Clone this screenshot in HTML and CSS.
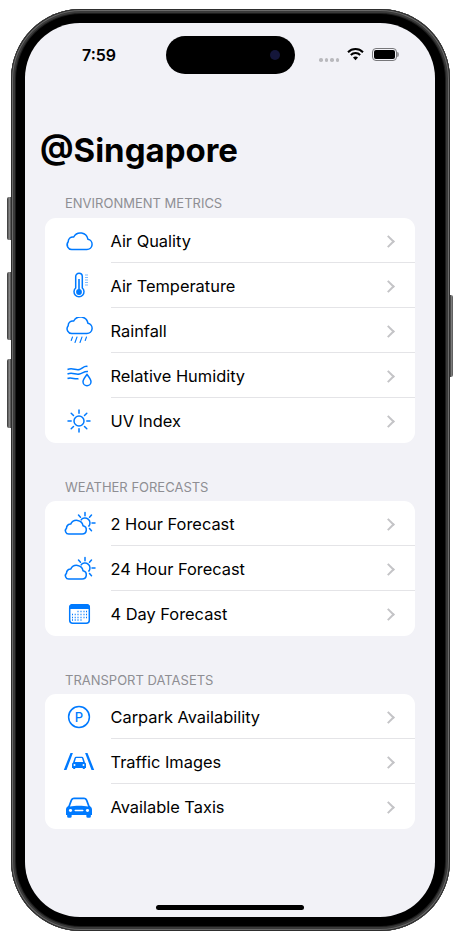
FILE: index.html
```html
<!DOCTYPE html>
<html lang="en">
<head>
	<meta charset="UTF-8">
	<title>@Singapore</title>
	<link rel="stylesheet" href="styles.css">
</head>
<body>
	<div class="phone">
		<div class="side-btn btn-action"></div>
		<div class="side-btn btn-up"></div>
		<div class="side-btn btn-down"></div>
		<div class="side-btn btn-power"></div>
		<div class="screen">
			<div class="status">
				<div class="time">7:59</div>
				<div class="island"><div class="lens"></div></div>
				<div class="status-right">
					<div class="dots"><i></i><i></i><i></i><i></i></div>
					<svg class="wifi" width="17" height="14" viewBox="0 0 17 14">
						<path d="M1 5.200a10.600 10.600 0 0 1 15 0" fill="none" stroke="#000" stroke-width="2"/>
						<path d="M3.800 8a6.700 6.700 0 0 1 9.400 0" fill="none" stroke="#000" stroke-width="2"/>
						<path d="M6 10.600a3.400 3.400 0 0 1 5 0L8.500 13.200z" fill="#000"/>
					</svg>
					<div class="battery"><div class="battery-fill"></div></div>
				</div>
			</div>

			<h1 class="title">@Singapore</h1>

			<div class="section-label first">ENVIRONMENT METRICS</div>
			<div class="card">
				<div class="row">
					<svg class="icon" width="34" height="28" viewBox="0 0 34 28"><path class="line" d="M10.500 22.500h14.300a5.200 5.200 0 0 0 1.100-10.300 7.600 7.600 0 0 0-14.200-2.200 4.600 4.600 0 0 0-5.500 4.700 4.800 4.800 0 0 0 4.300 7.800z"/></svg>
					<div class="row-body"><span>Air Quality</span><span class="chev"></span></div>
				</div>
				<div class="row">
					<svg class="icon" width="34" height="28" viewBox="0 0 34 28">
						<path class="line" d="M13.700 16V4.500a3.300 3.300 0 0 1 6.600 0V16a5 5 0 1 1-6.600 0z"/>
						<circle class="fill" cx="17" cy="20" r="2.900"/>
						<rect class="fill" x="16.200" y="7" width="1.600" height="12"/>
						<path class="tick" d="M23 3h3M23 5.500h3M23 8h3M23 10.500h3M23 13h3"/>
					</svg>
					<div class="row-body"><span>Air Temperature</span><span class="chev"></span></div>
				</div>
				<div class="row">
					<svg class="icon" width="34" height="28" viewBox="0 0 34 28">
						<path class="line" d="M10.500 16.500h14.300a5.200 5.200 0 0 0 1.100-10.300 7.600 7.600 0 0 0-14.200-2.200 4.600 4.600 0 0 0-5.500 4.700 4.800 4.800 0 0 0 4.300 7.800z"/>
						<path class="thin" d="M10.500 20l-1.300 3.500M15 20l-2 5.500M20 20l-2 5.500M24.500 20l-1.300 3.500"/>
					</svg>
					<div class="row-body"><span>Rainfall</span><span class="chev"></span></div>
				</div>
				<div class="row">
					<svg class="icon" width="34" height="28" viewBox="0 0 34 28">
						<path class="line" d="M5.500 7.500c5-2 8 1 12 0 3-.8 4.500-4 8-3M5.500 12c5-2 8 1 12 0 3-.8 5-3 8.500-2.500M5.500 16.500c4-1.800 7 1.200 11 .2"/>
						<path class="line" d="M25 12.500c-2.200 3-4 5-4 7.200a4 4 0 0 0 8 0c0-2.200-1.800-4.200-4-7.200z"/>
					</svg>
					<div class="row-body"><span>Relative Humidity</span><span class="chev"></span></div>
				</div>
				<div class="row">
					<svg class="icon" width="34" height="28" viewBox="0 0 34 28">
						<circle class="line" cx="17" cy="14" r="5"/>
						<path class="ray" d="M17 3v3.200M17 21.800V25M6 14h3.200M24.800 14H28M9.200 6.200l2.300 2.300M22.500 19.500l2.300 2.300M9.200 21.800l2.300-2.300M22.500 8.500l2.300-2.300"/>
					</svg>
					<div class="row-body"><span>UV Index</span><span class="chev"></span></div>
				</div>
			</div>

			<div class="section-label">WEATHER FORECASTS</div>
			<div class="card">
				<div class="row">
					<svg class="icon" width="34" height="28" viewBox="0 0 34 28">
						<use href="#cloud-sun"/>
					</svg>
					<div class="row-body"><span>2 Hour Forecast</span><span class="chev"></span></div>
				</div>
				<div class="row">
					<svg class="icon" width="34" height="28" viewBox="0 0 34 28">
						<use href="#cloud-sun"/>
					</svg>
					<div class="row-body"><span>24 Hour Forecast</span><span class="chev"></span></div>
				</div>
				<div class="row">
					<svg class="icon" width="34" height="28" viewBox="0 0 34 28">
						<rect class="line" x="7.700" y="4.700" width="19.600" height="18.600" rx="3"/>
						<path class="fill" d="M7 9V7.500A3.500 3.500 0 0 1 10.500 4h14A3.500 3.500 0 0 1 28 7.500V9z"/>
						<path class="dot-grid" d="M15.500 11.500h1M18.500 11.500h1M21.500 11.500h1M24 11.500h1M10 14.500h1M12.700 14.500h1M15.500 14.500h1M18.500 14.500h1M21.500 14.500h1M24 14.500h1M10 17.500h1M12.700 17.500h1M15.500 17.500h1M18.500 17.500h1M21.500 17.500h1M24 17.500h1M10 20h1M12.700 20h1M15.500 20h1M18.500 20h1"/>
					</svg>
					<div class="row-body"><span>4 Day Forecast</span><span class="chev"></span></div>
				</div>
			</div>

			<div class="section-label">TRANSPORT DATASETS</div>
			<div class="card">
				<div class="row">
					<svg class="icon" width="34" height="28" viewBox="0 0 34 28">
						<circle class="line" cx="17" cy="14" r="10.400"/>
						<text class="icon-letter" x="17" y="18.800" text-anchor="middle">P</text>
					</svg>
					<div class="row-body"><span>Carpark Availability</span><span class="chev"></span></div>
				</div>
				<div class="row">
					<svg class="icon" width="34" height="28" viewBox="0 0 34 28">
						<path class="fill" d="M8.500 5h2.400L4.500 22H1.800zM25.500 5h-2.400L29.500 22h2.700z"/>
						<path class="fill" d="M11 14.500l1.500-4.500c.3-.8.8-1.200 1.600-1.200h5.800c.8 0 1.300 .4 1.600 1.200L23 14.500c.8 .5 1 1 1 1.700V20h-1.200v1h-2v-1H13.200v1h-2v-1H10v-3.800c0-.7 .3-1.200 1-1.700z"/>
						<path class="cut-fill" d="M12.800 14l1.100-3.600c.1-.3 .3-.4 .6-.4h5c.3 0 .5 .1 .6 .4L21.200 14z"/>
						<circle class="cut-fill" cx="12.500" cy="17" r="1"/>
						<circle class="cut-fill" cx="21.500" cy="17" r="1"/>
					</svg>
					<div class="row-body"><span>Traffic Images</span><span class="chev"></span></div>
				</div>
				<div class="row">
					<svg class="icon" width="34" height="28" viewBox="0 0 34 28">
						<g transform="translate(17 14) scale(1.130 1) translate(-17 -14)">
							<path class="fill" d="M7.500 13l2-6c.5-1.600 1.500-2.500 3.200-2.500h8.600c1.700 0 2.700 .9 3.200 2.500l2 6c1.300 .8 2 2 2 3.500v5.500h-1v1.500a1.300 1.300 0 0 1-1.300 1.300h-1.400a1.300 1.300 0 0 1-1.300-1.300V22H10.500v1.500a1.300 1.300 0 0 1-1.300 1.300H7.800a1.300 1.300 0 0 1-1.300-1.300V22h-1v-5.500c0-1.500 .7-2.700 2-3.500z"/>
							<path class="cut-fill" d="M9 13.500l1.800-5.600c.3-1 1-1.600 2-1.600h8.400c1 0 1.700 .6 2 1.600L25 13.500c-2-.5-5-.7-8-.7s-6 .2-8 .7z"/>
							<circle class="cut-fill" cx="9.500" cy="17.500" r="1.400"/>
							<circle class="cut-fill" cx="24.500" cy="17.500" r="1.400"/>
							<rect class="cut-fill" x="13" y="16.800" width="8" height="1.500" rx=".7"/>
						</g>
					</svg>
					<div class="row-body"><span>Available Taxis</span><span class="chev"></span></div>
				</div>
			</div>

			<div class="home-bar"></div>
		</div>
	</div>

	<svg class="defs" width="0" height="0">
		<defs>
			<g id="cloud-sun">
				<path class="ray" d="M23 2.500v3.200M33 13h-3M16.500 5l2 2.300M29.500 5l-2 2.300M27.500 18.500l2 2.300"/>
				<path class="line" d="M18.800 10.300a5 5 0 1 1 7.700 6.300"/>
				<path class="line" d="M7 24h13a4.200 4.200 0 0 0 1-8.300 6.500 6.500 0 0 0-12.200-1.800 4.200 4.200 0 0 0-4.300 4.200A3.400 3.400 0 0 0 7 24z"/>
			</g>
		</defs>
	</svg>
</body>
</html>
```

FILE: styles.css
```css
* {margin: 0;padding: 0;box-sizing: border-box;}
body {background: #fff; font-family: Inter, "Liberation Sans", sans-serif; color: #000;}
.defs {position: absolute;}

.phone {
	position: relative;
	width: 439px;
	height: 922px;
	margin: 9px 0 0 11px;
	padding: 14px 15px 14px 14px;
	background: #000;
	border-radius: 70px;
	box-shadow: inset 0 0 0 1px #2e2e2e, inset 0 0 0 2px #6a6a6a, inset 0 0 0 4px #3a3a3a, inset 0 0 0 5px #1c1c1c;
}
.side-btn {position: absolute; width: 4px; background: linear-gradient(90deg, #333, #8a8a8a 60%, #444); border-radius: 2px 0 0 2px;}
.btn-action {left: -4px; top: 188px; height: 43px;}
.btn-up {left: -4px; top: 263px; height: 68px;}
.btn-down {left: -4px; top: 350px; height: 69px;}
.btn-power {right: -3px; top: 286px; height: 82px; width: 3px; border-radius: 0 2px 2px 0;}

.screen {
	height: 894px;
	background: #f2f2f7;
	border-radius: 55px;
	padding: 13px 20px 0;
	display: flex;
	flex-direction: column;
	overflow: hidden;
}

.status {display: flex; align-items: center; height: 38px;}
.time {width: 121px; padding-left: 37px; font-size: 16px; font-weight: 600;}
.island {
	width: 129px;
	height: 38px;
	background: #000;
	border-radius: 19px;
	display: flex;
	align-items: center;
	justify-content: flex-end;
	padding-right: 15px;
}
.lens {width: 10px; height: 10px; border-radius: 50%; background: #14163a;}
.status-right {display: flex; align-items: center; margin-left: 24px;}
.dots {display: flex; gap: 2px; margin-top: 10px; margin-right: 8px;}
.dots i {width: 3.500px; height: 3.500px; border-radius: 50%; background: #b9b9bd;}
.wifi {margin-top: -2px;}
.battery {position: relative; width: 25px; height: 13px; margin-left: 8px; margin-top: -2px; border: 1px solid #77777a; border-radius: 4px; padding: 1px;}
.battery::after {content: ""; position: absolute; right: -3px; top: 3px; width: 2px; height: 5px; background: #9a9a9d; border-radius: 0 2px 2px 0;}
.battery-fill {height: 100%; background: #000; border-radius: 2px;}

.title {font-size: 33px; line-height: 40px; font-weight: 700; margin: 56px 0 0 -5px;}

.section-label {font-size: 13px; line-height: 16px; color: #8e8e93; padding-left: 20px; margin: 36px 0 6px;}
.section-label.first {margin: 25px 0 7px;}

.card {background: #fff; border-radius: 11px;}
.row {display: flex; align-items: center; height: 45px; padding-left: 17px;}
.icon {flex: none; margin-right: 14.500px;}
.row-body {
	flex: 1;
	height: 45px;
	display: flex;
	align-items: center;
	justify-content: space-between;
	padding: 2px 23px 0 0;
	font-size: 16.400px;
	border-bottom: 1px solid #e4e4e7;
}
.row:last-child .row-body {border-bottom-color: transparent;}
.chev {
	width: 9px;
	height: 9px;
	margin-right: -1px;
	border-top: 2px solid #c4c4c7;
	border-right: 2px solid #c4c4c7;
	transform: rotate(45deg);
}

.line {fill: none; stroke: #007aff; stroke-width: 1.500;}
.thin {fill: none; stroke: #007aff; stroke-width: 1.100; stroke-linecap: round;}
.ray {fill: none; stroke: #007aff; stroke-width: 1.500; stroke-linecap: round;}
.tick {fill: none; stroke: #7fbcff; stroke-width: 1.200;}
.fill {fill: #007aff;}
.cut-fill {fill: #fff;}
.dot-grid {fill: none; stroke: #007aff; stroke-width: 1.300;}
.icon-letter {font-family: Inter, sans-serif; font-size: 13px; font-weight: 500; fill: #007aff;}

.home-bar {width: 148px; height: 5px; background: #000; border-radius: 3px; margin: auto auto 7px; flex: none;}
```
